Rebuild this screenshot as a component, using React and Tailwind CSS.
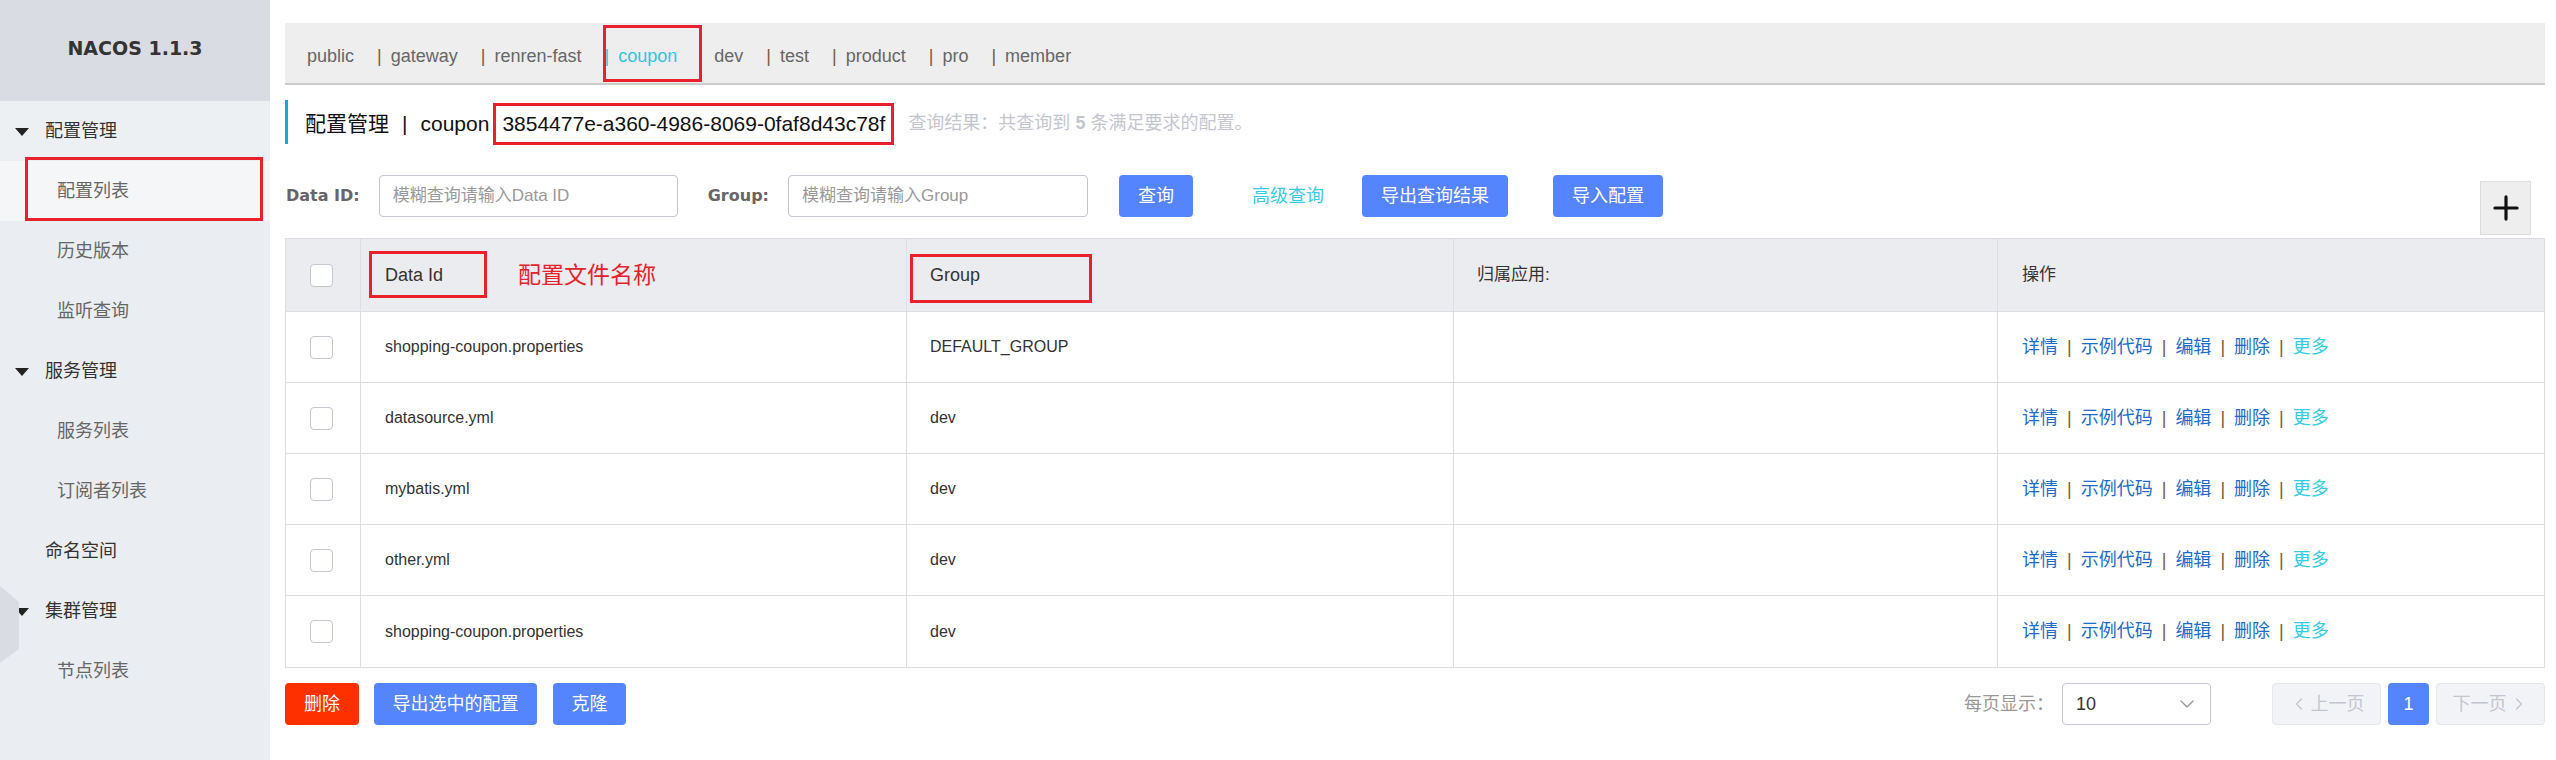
import { ChevronDown, ChevronLeft, ChevronRight, Plus } from "lucide-react";

const FONT = "font-['Liberation_Sans','Noto_Sans_CJK_SC',sans-serif]";

const MENU = [
  { label: "配置管理", group: true, tint: true },
  { label: "配置列表", active: true },
  { label: "历史版本" },
  { label: "监听查询" },
  { label: "服务管理", group: true },
  { label: "服务列表" },
  { label: "订阅者列表" },
  { label: "命名空间", top: true },
  { label: "集群管理", group: true },
  { label: "节点列表" },
];

const ROWS = [
  { id: "shopping-coupon.properties", group: "DEFAULT_GROUP" },
  { id: "datasource.yml", group: "dev" },
  { id: "mybatis.yml", group: "dev" },
  { id: "other.yml", group: "dev" },
  { id: "shopping-coupon.properties", group: "dev" },
];

const COLS = "grid grid-cols-[75px_546px_547px_544px_1fr]";

function Sidebar() {
  return (
    <aside className="relative w-[270px] shrink-0 bg-[#eaedf1]">
      <div className="h-[101px] bg-[#d9dde3] flex items-center justify-center">
        <span className="font-['DejaVu_Sans',sans-serif] font-bold text-[19px] text-[#333] pb-[4px]">NACOS 1.1.3</span>
      </div>
      {MENU.map((m) => (
        <div
          key={m.label}
          className={`relative h-[60px] flex items-center text-[18px] ${m.tint ? "bg-[#edf0f3]" : ""} ${m.active ? "bg-[#f4f6f8]" : ""}`}
        >
          {m.group && (
            <svg width="14" height="8" viewBox="0 0 14 8" className="absolute left-[15px] top-[27px]">
              <path d="M0 0h14L7 8z" fill="#222" />
            </svg>
          )}
          <span className={m.group || m.top ? "pl-[45px] text-[#333]" : "pl-[57px] text-[#666]"}>{m.label}</span>
          {m.active && <div className="absolute left-[25px] top-[-4px] w-[238px] h-[64px] border-[3px] border-[#e8212b]" />}
        </div>
      ))}
      {/* collapse handle */}
      <svg width="20" height="78" viewBox="0 0 20 78" className="absolute left-0 top-[586px]">
        <path d="M0 0L19 16V63L0 77z" fill="#d9dde3" />
      </svg>
    </aside>
  );
}

const TABS = [
  { name: "public", sep: false },
  { name: "gateway", sep: true },
  { name: "renren-fast", sep: true },
  { name: "coupon", sep: true, active: true },
  { name: "dev", sep: false },
  { name: "test", sep: true },
  { name: "product", sep: true },
  { name: "pro", sep: true },
  { name: "member", sep: true },
];

function Tabs() {
  return (
    <div className="h-[62px] bg-[#eeeeee] border-b-2 border-[#cccccc] flex items-center pl-[22px] pt-[7px] text-[18px] text-[#666]">
      {TABS.map((t, i) => (
        <div
          key={t.name}
          className={`relative flex items-center ${i === 0 ? "" : t.sep ? "ml-[23px]" : "ml-[37px]"} ${t.active ? "text-[#2fc6e0]" : ""}`}
        >
          {t.sep && <span className={`mr-[9px] ${t.active ? "text-[#2fc6e0]" : "text-[#7a5a3a]"}`}>|</span>}
          <span>{t.name}</span>
          {t.active && <div className="absolute left-[-2px] top-[-18px] w-[99px] h-[57px] border-[3px] border-[#e8212b]" />}
        </div>
      ))}
    </div>
  );
}

function Checkbox() {
  return <div className="w-[23px] h-[23px] rounded-[4px] border border-[#c4c6cf] bg-white" />;
}

function Btn({ children, className = "" }) {
  return (
    <button className={`h-[42px] rounded-[4px] text-white text-[18px] flex items-center justify-center ${className}`}>
      {children}
    </button>
  );
}

function Actions() {
  const sep = <span className="mx-[9px] text-[#7a5a3a]">|</span>;
  return (
    <div className="flex items-center text-[18px] text-[#1b6ccd]">
      <span>详情</span>{sep}<span>示例代码</span>{sep}<span>编辑</span>{sep}<span>删除</span>{sep}
      <span className="text-[#33cde5]">更多</span>
    </div>
  );
}

export default function App() {
  return (
    <div className={`flex w-[2556px] h-[760px] bg-white overflow-hidden ${FONT}`}>
      <Sidebar />
      <main className="flex-1 pl-[15px] pr-[11px] pt-[23px]">
        <Tabs />

        {/* title */}
        <div className="mt-[15px] h-[44px] border-l-[3px] border-[#1aa3dc] flex items-center pl-[17px] pt-[3px] text-[21px] text-[#111]">
          <span>配置管理</span>
          <span className="mx-[13px]">|</span>
          <span>coupon</span>
          <span className="ml-[4px] h-[42px] flex items-center px-[6px] border-[3px] border-[#e8212b]">3854477e-a360-4986-8069-0faf8d43c78f</span>
          <span className="ml-[14px] text-[18px] text-[#c4c6cf]">
            查询结果：共查询到 <b className="font-bold">5</b> 条满足要求的配置。
          </span>
        </div>

        {/* search row */}
        <div className="mt-[31px] flex items-start">
          <div className="h-[42px] flex items-center">
            <span className="font-['DejaVu_Sans',sans-serif] font-bold text-[16px] text-[#666] pl-[1px]">Data ID:</span>
            <div className="ml-[19px] w-[299px] h-[42px] rounded-[4px] border border-[#c4c6cf] flex items-center pl-[13px] text-[17px] text-[#999]">
              模糊查询请输入Data ID
            </div>
            <span className="ml-[30px] font-['DejaVu_Sans',sans-serif] font-bold text-[16px] text-[#666]">Group:</span>
            <div className="ml-[19px] w-[300px] h-[42px] rounded-[4px] border border-[#c4c6cf] flex items-center pl-[13px] text-[17px] text-[#999]">
              模糊查询请输入Group
            </div>
            <Btn className="ml-[31px] w-[74px] bg-[#5584ff]">查询</Btn>
            <span className="ml-[59px] text-[18px] text-[#33cde5]">高级查询</span>
            <Btn className="ml-[38px] w-[146px] bg-[#5584ff]">导出查询结果</Btn>
            <Btn className="ml-[45px] w-[110px] bg-[#5584ff]">导入配置</Btn>
          </div>
          <div className="ml-auto mt-[6px] mr-[14px] w-[51px] h-[54px] bg-[#eeeeee] border border-[#dddddd] flex items-center justify-center">
            <Plus size={38} strokeWidth={2} color="#111" />
          </div>
        </div>

        {/* table */}
        <div className="mt-[3px] border border-[#dcdee3] text-[16px] text-[#333]">
          <div className={`${COLS} h-[73px] bg-[#ebecf0] border-b border-[#dcdee3] text-[18px]`}>
            <div className="border-r border-[#dcdee3] flex items-center pl-[24px]"><Checkbox /></div>
            <div className="relative border-r border-[#dcdee3] flex items-center pl-[24px]">
              <span>Data Id</span>
              <span className="ml-[75px] text-[23px] text-[#e8212b]">配置文件名称</span>
              <div className="absolute left-[8px] top-[12px] w-[118px] h-[47px] border-[3px] border-[#e8212b]" />
            </div>
            <div className="relative border-r border-[#dcdee3] flex items-center pl-[23px]">
              <span>Group</span>
              <div className="absolute left-[3px] top-[15px] w-[182px] h-[49px] border-[3px] border-[#e8212b]" />
            </div>
            <div className="border-r border-[#dcdee3] flex items-center pl-[23px] text-[17px]">归属应用:</div>
            <div className="flex items-center pl-[24px] text-[17px]">操作</div>
          </div>
          {ROWS.map((r, i) => (
            <div key={i} className={`${COLS} h-[71px] ${i < ROWS.length - 1 ? "border-b border-[#dcdee3]" : ""}`}>
              <div className="border-r border-[#dcdee3] flex items-center pl-[24px]"><Checkbox /></div>
              <div className="border-r border-[#dcdee3] flex items-center pl-[24px]">{r.id}</div>
              <div className="border-r border-[#dcdee3] flex items-center pl-[23px]">{r.group}</div>
              <div className="border-r border-[#dcdee3]" />
              <div className="flex items-center pl-[24px]"><Actions /></div>
            </div>
          ))}
        </div>

        {/* footer */}
        <div className="mt-[15px] flex items-center">
          <Btn className="w-[74px] bg-[#ff3000]">删除</Btn>
          <Btn className="ml-[15px] w-[163px] bg-[#5584ff]">导出选中的配置</Btn>
          <Btn className="ml-[16px] w-[73px] bg-[#5584ff]">克隆</Btn>
          <div className="ml-auto flex items-center">
            <span className="text-[18px] text-[#999]">每页显示：</span>
            <div className="ml-[8px] w-[149px] h-[42px] rounded-[4px] border border-[#c4c6cf] flex items-center justify-between pl-[13px] pr-[11px] text-[18px] text-[#333]">
              <span>10</span>
              <ChevronDown size={24} strokeWidth={1.4} color="#999" />
            </div>
            <div className="ml-[61px] w-[109px] h-[42px] rounded-[4px] border border-[#e6e7eb] bg-[#f2f3f7] flex items-center justify-center text-[18px] text-[#c4c6cf]">
              <ChevronLeft size={20} strokeWidth={1.6} /><span className="ml-[2px]">上一页</span>
            </div>
            <div className="ml-[7px] w-[41px] h-[42px] rounded-[4px] bg-[#5584ff] flex items-center justify-center text-[18px] text-white">1</div>
            <div className="ml-[7px] w-[109px] h-[42px] rounded-[4px] border border-[#e6e7eb] bg-[#f2f3f7] flex items-center justify-center text-[18px] text-[#c4c6cf]">
              <span className="mr-[2px]">下一页</span><ChevronRight size={20} strokeWidth={1.6} />
            </div>
          </div>
        </div>
      </main>
    </div>
  );
}
